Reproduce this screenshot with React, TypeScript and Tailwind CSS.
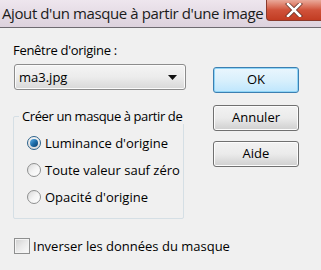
import React from "react";

function Radio({ checked, label }: { checked?: boolean; label: string }) {
  return (
    <div className="flex items-center h-[14px]">
      <div
        className={
          "w-[14px] h-[14px] shrink-0 rounded-full border flex items-center justify-center " +
          (checked
            ? "border-[#2c628b] bg-gradient-to-b from-[#f4f4f4] to-[#dcdcdc]"
            : "border-[#8e8f8f] bg-gradient-to-br from-[#d8d8d8] via-[#f4f4f4] to-[#fefefe]")
        }
      >
        {checked && (
          <div className="w-[8px] h-[8px] rounded-full bg-gradient-to-br from-[#5fb3ea] via-[#1e6fab] to-[#0c3f6e]" />
        )}
      </div>
      <span className="ml-[4px] text-[13px] leading-none text-black whitespace-nowrap">{label}</span>
    </div>
  );
}

function Btn({ label, def, cls }: { label: string; def?: boolean; cls?: string }) {
  return (
    <div
      className={
        "w-[86px] h-[26px] rounded-[3px] border flex items-center justify-center text-[13px] text-black bg-gradient-to-b " +
        (def
          ? "border-[#3c7fb1] from-[#eaf6fd] via-[#d9f0fc] to-[#bee6fd] shadow-[inset_0_0_0_1px_#8fd5f7] "
          : "border-[#707070] from-[#f2f2f2] via-[#ebebeb] to-[#cfcfcf] shadow-[inset_0_0_0_1px_#fcfcfc] ") +
        (cls ?? "")
      }
    >
      {label}
    </div>
  );
}

export default function App() {
  return (
    <div
      className="w-[321px] h-[270px] bg-[#f0f0f0] relative overflow-hidden"
      style={{ fontFamily: '"Open Sans", "Noto Sans", sans-serif' }}
    >
      {/* Title bar */}
      <div className="h-[28px] bg-gradient-to-b from-[#eee6ee] to-[#ddd2dd] border-b border-[#6e6a70] flex items-center pl-[2px]">
        <span className="text-[15px] leading-none text-[#1b1b1b] tracking-[-0.4px] whitespace-nowrap">
          Ajout d'un masque à partir d'une image
        </span>
      </div>
      <div className="absolute top-0 right-0 w-[55px] h-[21px] rounded-bl-[4px] border border-t-0 border-r-0 border-[#8a3a2c] bg-gradient-to-b from-[#e9a99a] via-[#d0523a] to-[#c23c22] flex items-center justify-center">
        <svg width="18" height="14" viewBox="0 0 18 14">
          <path d="M3 1 L15 13 M15 1 L3 13" stroke="#5a2a22" strokeWidth="4" strokeLinecap="square" />
          <path d="M3 1 L15 13 M15 1 L3 13" stroke="#ffffff" strokeWidth="2.6" strokeLinecap="square" />
        </svg>
      </div>

      {/* Body */}
      <div className="flex pt-[14px]">
        <div className="w-[213px] shrink-0 pl-[13px]">
          <div className="text-[13px] leading-[16px] text-black whitespace-nowrap tracking-[-0.3px]">Fenêtre d'origine :</div>
          <div className="mt-[6px] ml-[1px] w-[172px] h-[26px] rounded-[3px] border border-[#8c8c8c] bg-gradient-to-b from-[#f4f4f4] via-[#ececec] to-[#d8d8d8] flex items-center justify-between pl-[4px] pr-[8px] shadow-[inset_0_0_0_1px_#fbfbfb]">
            <span className="text-[13px] text-black leading-none">ma3.jpg</span>
            <svg width="9" height="5" viewBox="0 0 9 5">
              <path d="M0 0 H9 L4.5 5 Z" fill="#111" />
            </svg>
          </div>

          <div className="relative mt-[26px] w-[171px] h-[103px] border border-[#d5dfe5] rounded-[2px]">
            <div className="absolute -top-[9px] left-[5px] px-[3px] bg-[#f0f0f0] text-[13px] leading-[16px] text-black whitespace-nowrap tracking-[-0.4px]">
              Créer un masque à partir de
            </div>
            <div className="flex flex-col gap-[13px] pl-[13px] pt-[19px]">
              <Radio checked label="Luminance d'origine" />
              <Radio label="Toute valeur sauf zéro" />
              <Radio label="Opacité d'origine" />
            </div>
          </div>

          <div className="mt-[19px] ml-[1px] flex items-center">
            <div className="w-[16px] h-[16px] shrink-0 border border-[#8e8f8f] bg-gradient-to-br from-[#cfcfcf] via-[#eaeaea] to-[#fbfbfb] shadow-[inset_0_0_0_1px_#f4f4f4]" />
            <span className="ml-[3px] text-[13px] leading-none text-black whitespace-nowrap">Inverser les données du masque</span>
          </div>
        </div>

        <div className="flex flex-col pt-[25px]">
          <Btn def label="OK" />
          <Btn label="Annuler" cls="mt-[12px]" />
          <Btn label="Aide" cls="mt-[10px]" />
        </div>
      </div>
    </div>
  );
}
